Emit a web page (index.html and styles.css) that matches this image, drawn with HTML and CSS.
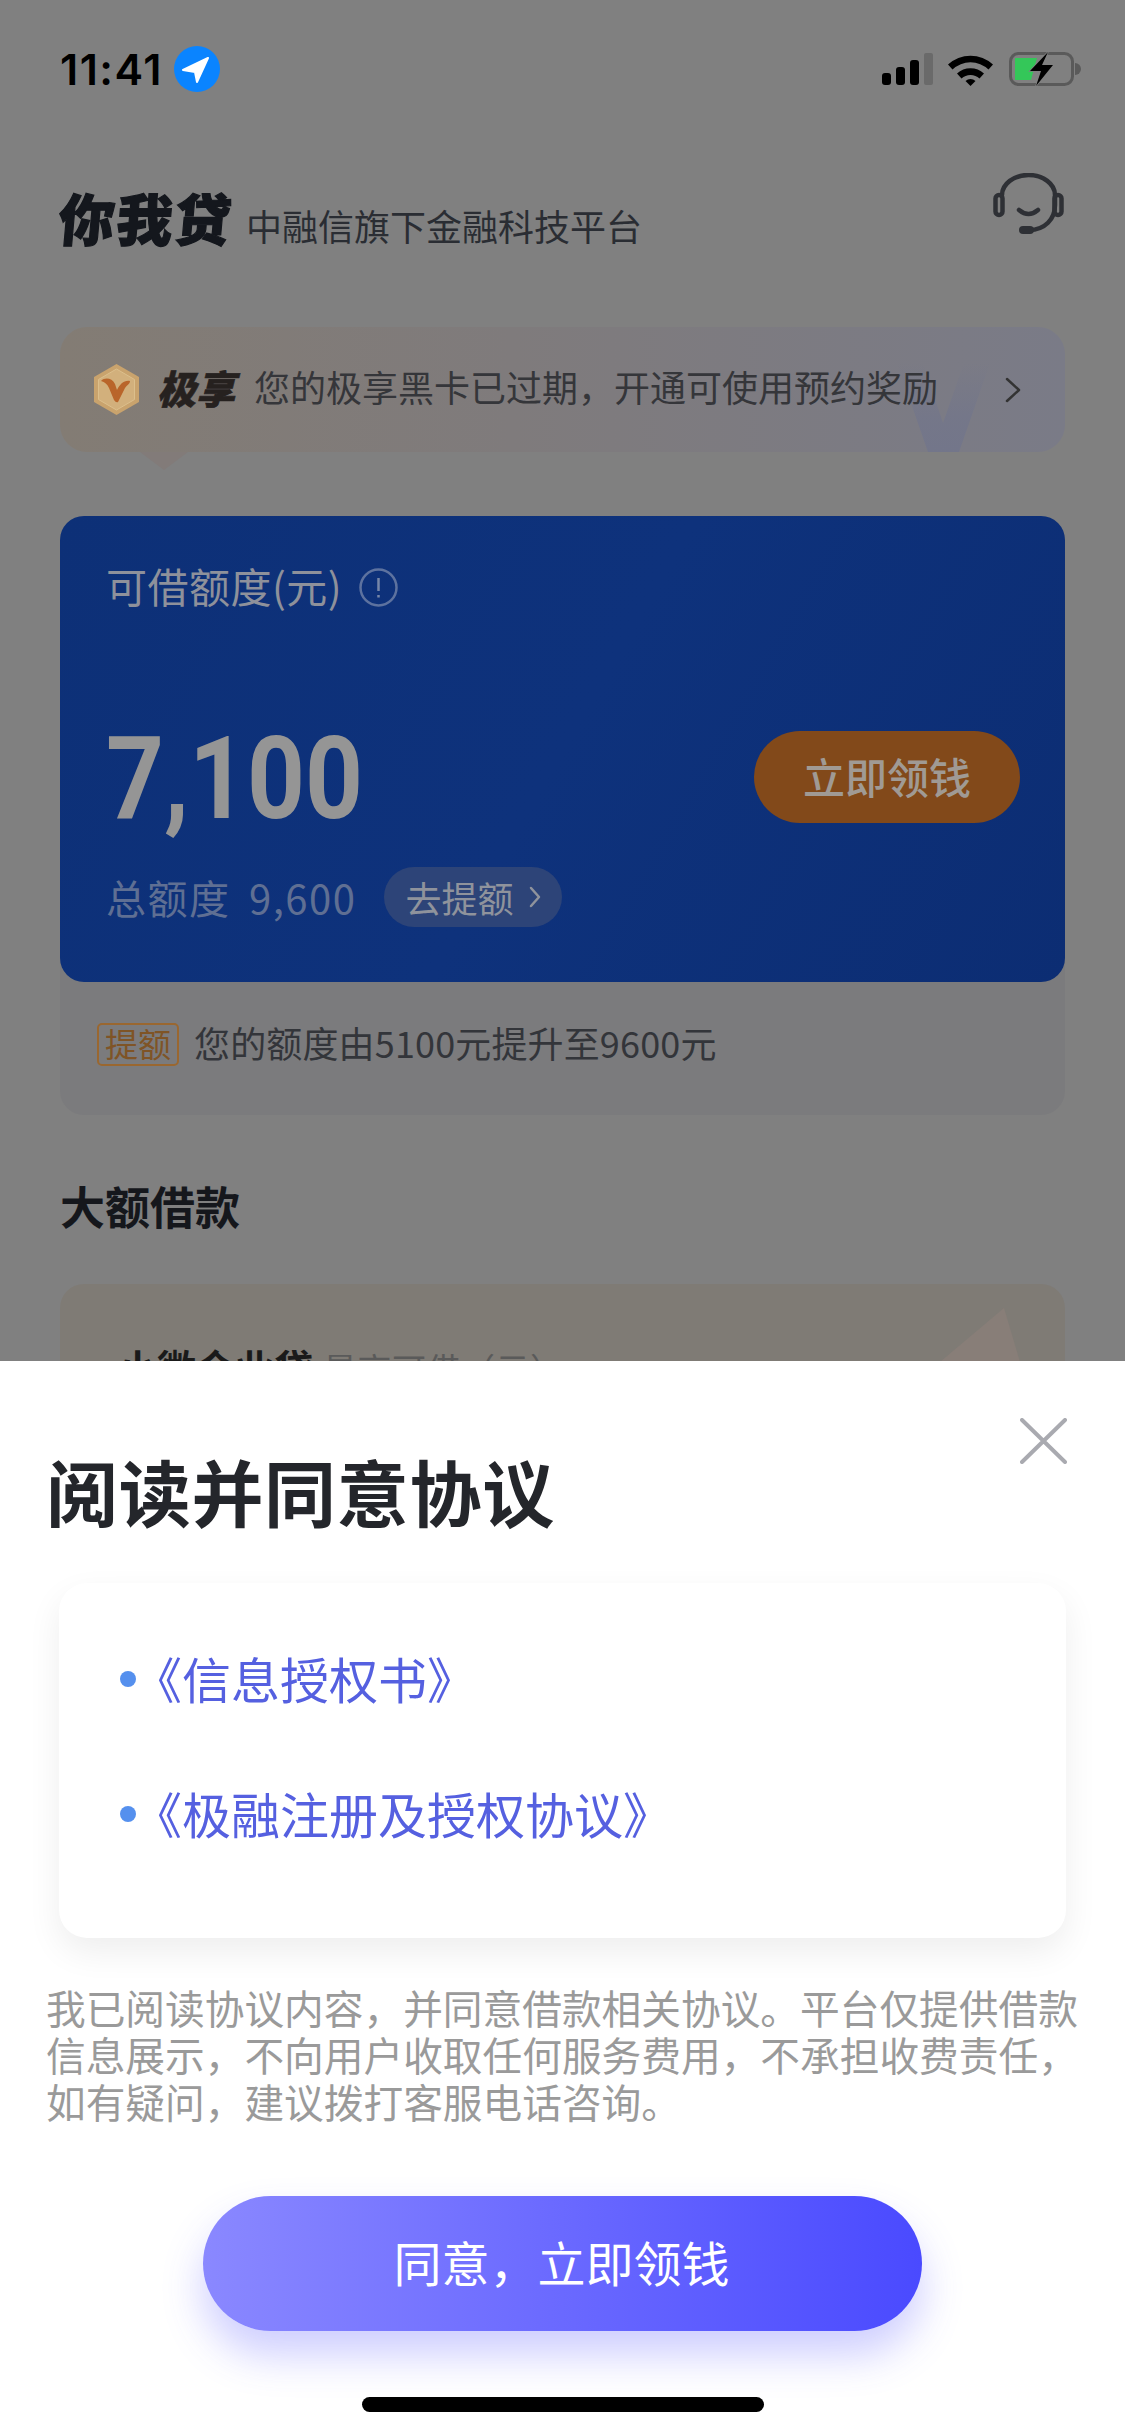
FILE: index.html
```html
<!DOCTYPE html>
<html lang="zh-CN">
<head>
<meta charset="utf-8">
<title>你我贷</title>
<link rel="stylesheet" href="styles.css">
</head>
<body>
<div class="screen">
  <main class="page">
    <div class="status">
      <div class="status-left">
        <span class="time">11:41</span>
        <svg class="loc" viewBox="0 0 46 46"><circle cx="23" cy="23" r="23" fill="#0a84ff"/><path d="M34 12 9 24l12 2 2 10z" fill="#fff" stroke="#fff" stroke-width="2" stroke-linejoin="round"/></svg>
      </div>
      <div class="status-right">
        <svg class="signal" viewBox="0 0 51 32"><rect x="0" y="20" width="9" height="12" rx="3"/><rect x="14" y="14" width="9" height="18" rx="3"/><rect x="28" y="7" width="9" height="25" rx="3"/><rect x="42" y="0" width="9" height="32" rx="2" fill="#6a6a6a"/></svg>
        <svg class="wifi" viewBox="0 0 45 33"><path d="M0 11.5A33 33 0 0 1 45 11.5L40.500 16.500A26 26 0 0 0 4.500 16.500Z"/><path d="M9 20.500A20 20 0 0 1 36 20.500L31.500 25.500A13 13 0 0 0 13.500 25.500Z"/><path d="M17.500 28A7.500 7.500 0 0 1 27.500 28L22.500 33Z"/></svg>
        <svg class="battery" viewBox="0 0 73 34"><rect x="1.500" y="1.500" width="62" height="31" rx="8" fill="none" stroke="#5a5a5a" stroke-width="3"/><path d="M6 6h22l-6 22H6z" fill="#34c759"/><path d="M66 11a6 6 0 0 1 0 12z" fill="#5a5a5a"/><path d="M39 0 21 19h11l-5 15 17-21H33z" fill="#000" stroke="#808080" stroke-width="1.500" paint-order="stroke"/></svg>
      </div>
    </div>

    <header class="header">
      <div class="brand">
        <span class="logo">你我贷</span>
        <span class="slogan">中融信旗下金融科技平台</span>
      </div>
      <svg class="headset" viewBox="0 0 71 62" fill="none" stroke="#2e3035" stroke-width="4.500" stroke-linecap="round"><path d="M9 22a26.500 20 0 0 1 53 0v10c0 14-10 25-26 25"/><rect x="2.500" y="22" width="7" height="20" rx="3.500"/><rect x="61.500" y="22" width="7" height="20" rx="3.500"/><path d="M26 37q9.500 8 19 0"/><path d="M30 57h7" stroke-width="8"/></svg>
    </header>

    <section class="vip">
      <svg class="vip-mark" viewBox="0 0 93 89"><defs><linearGradient id="vipFade" x1="0" y1="0" x2="0" y2="1"><stop offset="0" stop-color="#73768a" stop-opacity="0"/><stop offset="0.6" stop-color="#73768a" stop-opacity="0.8"/><stop offset="1" stop-color="#73768a"/></linearGradient></defs><path d="M0 0h26l20 60L67 0h26L62 89H31z" fill="url(#vipFade)"/></svg>
      <svg class="vip-badge" viewBox="0 0 47 51"><path d="M23.500 0 46 13v25L23.500 51 1 38V13z" fill="#c9a36d"/><path d="M23.500 5 41.500 15.500v20L23.500 46 5.500 35.500v-20z" fill="#d2b07c" stroke="#dcbf8c"/><path d="M8 17C12 13 19 14 22 20L24 26C27 20 31 16 37 17 37 20 34 21 32 24L25 38Q23 39 21 36L16 24C14 20 12 18 8 17Z" fill="#b9652a"/></svg>
      <span class="vip-name">极享</span>
      <span class="vip-text">您的极享黑卡已过期，开通可使用预约奖励</span>
      <svg class="vip-arrow" viewBox="0 0 16 26" fill="none" stroke="#333" stroke-width="2.500" stroke-linecap="round" stroke-linejoin="round"><path d="M2 2l12 11L2 24"/></svg>
    </section>

    <section class="credit">
      <div class="limit">
        <div class="limit-label">
          <span>可借额度(元)</span>
          <svg class="info" viewBox="0 0 39 39" fill="none" stroke="#5d729f" stroke-width="2.500"><circle cx="19.500" cy="19.500" r="18"/><path d="M19.500 10v13M19.500 27v2.500" stroke="#7787a8"/></svg>
        </div>
        <div class="limit-main">
          <span class="amount">7,100</span>
          <span class="take">立即领钱</span>
        </div>
        <div class="limit-foot">
          <span class="total">总额度 9,600</span>
          <span class="raise">去提额<svg class="raise-arrow" viewBox="0 0 12 22" fill="none" stroke="#8f939c" stroke-width="2.500" stroke-linecap="round" stroke-linejoin="round"><path d="M2 2l8 9-8 9"/></svg></span>
        </div>
      </div>
      <div class="notice">
        <span class="tag">提额</span>
        <span class="notice-text">您的额度由5100元提升至9600元</span>
      </div>
    </section>

    <h2 class="section-title">大额借款</h2>

    <section class="loan">
      <svg class="loan-deco" viewBox="0 0 80 54"><path d="M64 0 0 54h80z" fill="#887e78"/></svg>
      <span class="loan-name">小微企业贷</span>
      <span class="loan-note">最高可借（元）</span>
    </section>
  </main>

  <section class="sheet">
    <div class="sheet-head">
      <h1 class="sheet-title">阅读并同意协议</h1>
      <svg class="close" viewBox="0 0 47 46" fill="none" stroke="#a9aab0" stroke-width="4" stroke-linecap="round"><path d="M2 2l43 42M45 2 2 44"/></svg>
    </div>
    <ul class="docs">
      <li class="doc">《信息授权书》</li>
      <li class="doc">《极融注册及授权协议》</li>
    </ul>
    <p class="terms">我已阅读协议内容，并同意借款相关协议。平台仅提供借款<br>信息展示，不向用户收取任何服务费用，不承担收费责任，<br>如有疑问，建议拨打客服电话咨询。</p>
    <button class="agree">同意，立即领钱</button>
    <div class="home-bar"></div>
  </section>
</div>
</body>
</html>
```

FILE: styles.css
```css
* { box-sizing: border-box; }
html, body { margin: 0; padding: 0; }
body {
  width: 1125px;
  height: 2436px;
  overflow: hidden;
  background: #fff;
  font-family: "Noto Sans CJK SC", "Noto Sans", sans-serif;
}
.screen { display: flex; flex-direction: column; height: 2436px; }

.page {
  height: 1361px;
  overflow: hidden;
  background: #808080;
  display: flex;
  flex-direction: column;
  flex: none;
}

/* status bar */
.status {
  height: 138px;
  flex: none;
  display: flex;
  align-items: center;
  justify-content: space-between;
  padding: 0 43px 0 60px;
}
.status-left { display: flex; align-items: center; gap: 11px; }
.time {
  font-family: Inter, "Noto Sans", sans-serif;
  font-weight: 600;
  font-size: 43px;
  line-height: 46px;
  letter-spacing: 1.5px;
  color: #000;
}
.loc { width: 46px; height: 46px; }
.status-right { display: flex; align-items: center; }
.signal { width: 51px; height: 32px; margin-right: 15px; }
.wifi { width: 45px; height: 33px; margin-right: 16px; }
.battery { width: 73px; height: 34px; }

/* header */
.header {
  flex: none;
  display: flex;
  justify-content: space-between;
  align-items: flex-start;
  padding: 35px 61px 0 59px;
  height: 189px;
}
.brand { display: flex; align-items: baseline; margin-top: 9px; }
.logo {
  display: inline-block;
  font-size: 56px;
  line-height: 70px;
  font-weight: 900;
  letter-spacing: 2px;
  color: #14171d;
  -webkit-text-stroke: 1.2px #14171d;
  transform: skewX(-5deg);
}
.slogan {
  font-size: 36px;
  line-height: 50px;
  margin-left: 13px;
  color: #2a2d33;
}
.headset { width: 71px; height: 62px; }

/* vip banner */
.vip {
  flex: none;
  position: relative;
  height: 125px;
  margin: 0 60px;
  padding: 0 44px 0 33px;
  display: flex;
  align-items: center;
  border-radius: 27px;
  background: linear-gradient(90deg, #837c74 0%, #7f7b7c 45%, #7a7b87 100%);
}
.vip::after {
  content: "";
  position: absolute;
  left: 80px;
  top: 125px;
  border-left: 24px solid transparent;
  border-right: 24px solid transparent;
  border-top: 18px solid #827b79;
}
.vip-mark { position: absolute; left: 837px; bottom: 0; width: 93px; height: 89px; }
.vip-badge { width: 47px; height: 51px; flex: none; position: relative; }
.vip-name {
  position: relative;
  margin: -5px 0 0 17px;
  font-size: 39px;
  line-height: 50px;
  font-weight: 900;
  font-style: italic;
  color: #26211f;
  -webkit-text-stroke: 0.6px #26211f;
}
.vip-text {
  position: relative;
  margin: -7px 0 0 19px;
  font-size: 36px;
  line-height: 50px;
  color: #35363a;
  white-space: nowrap;
}
.vip-arrow { position: relative; width: 16px; height: 26px; margin-left: auto; }

/* credit */
.credit {
  flex: none;
  margin: 64px 60px 0;
  border-radius: 24px;
  background: #7b7b7d;
}
.limit {
  height: 466px;
  padding: 51px 45px 0 46px;
  border-radius: 24px;
  background: linear-gradient(120deg, #0d3077 0%, #0e327c 50%, #0c2d73 100%);
}
.limit-label {
  display: flex;
  align-items: center;
  gap: 17px;
  height: 40px;
  font-size: 41px;
  line-height: 40px;
  letter-spacing: 0.5px;
  color: #8e919b;
}
.limit-label span { margin-top: -4px; }
.info { width: 39px; height: 39px; }
.limit-main {
  display: flex;
  justify-content: space-between;
  align-items: center;
  height: 92px;
  margin-top: 124px;
}
.amount {
  display: inline-block;
  margin-top: 4px;
  font-family: Roboto, sans-serif;
  font-weight: 700;
  font-size: 115px;
  line-height: 92px;
  color: #959595;
  transform: scaleX(0.88);
  transform-origin: left center;
}
.take {
  width: 266px;
  height: 92px;
  border-radius: 46px;
  background: #82491a;
  color: #a09a94;
  font-size: 42px;
  font-weight: 500;
  line-height: 90px;
  text-align: center;
}
.limit-foot {
  display: flex;
  align-items: center;
  height: 60px;
  margin-top: 44px;
}
.total {
  font-size: 40px;
  line-height: 58px;
  letter-spacing: 1.5px;
  word-spacing: 8px;
  color: #5f6f93;
}
.raise {
  display: flex;
  align-items: center;
  height: 60px;
  margin-left: 28px;
  padding: 0 21px;
  border-radius: 30px;
  background: #2d4478;
  font-size: 36px;
  line-height: 56px;
  color: #8f939c;
}
.raise-arrow { width: 12px; height: 22px; margin-left: 16px; }
.notice {
  height: 133px;
  display: flex;
  align-items: center;
  padding: 0 37px 14px;
}
.tag {
  width: 82px;
  height: 43px;
  margin-top: 6px;
  border: 2px solid #9a6730;
  border-radius: 5px;
  font-size: 33px;
  line-height: 37px;
  text-align: center;
  color: #7f5426;
  white-space: nowrap;
}
.notice-text {
  margin-left: 15px;
  font-size: 36px;
  line-height: 44px;
  letter-spacing: 0.15px;
  color: #33353a;
}

/* section */
.section-title {
  flex: none;
  margin: 70px 60px 0;
  font-size: 45px;
  line-height: 42px;
  font-weight: 700;
  color: #15171c;
}
.loan {
  flex: none;
  position: relative;
  height: 200px;
  margin: 57px 60px 0;
  padding: 60px 58px 0;
  border-radius: 24px;
  background: #7f7b75;
  display: flex;
  align-items: baseline;
}
.loan-deco { position: absolute; left: 880px; top: 24px; width: 80px; height: 54px; }
.loan-name { font-size: 39px; line-height: 44px; font-weight: 700; color: #1a1a1a; white-space: nowrap; }
.loan-note { margin-left: 10px; font-size: 34px; line-height: 44px; letter-spacing: 0.5px; color: #5a5a5a; white-space: nowrap; }

/* sheet */
.sheet {
  flex: 1;
  background: #fff;
  display: flex;
  flex-direction: column;
}
.sheet-head {
  display: flex;
  justify-content: space-between;
  align-items: flex-start;
  padding: 57px 58px 0 46px;
  height: 222px;
  flex: none;
}
.sheet-title {
  margin: 36px 0 0;
  font-size: 72px;
  line-height: 72px;
  font-weight: 700;
  letter-spacing: 0.7px;
  color: #24262b;
}
.close { width: 47px; height: 46px; flex: none; }
.docs {
  flex: none;
  list-style: none;
  margin: 0 59px;
  padding: 27px 0 0 61px;
  height: 355px;
  border-radius: 28px;
  background: #fff;
  box-shadow: 0 14px 34px rgba(0, 0, 0, 0.07);
}
.doc {
  display: flex;
  align-items: center;
  height: 135px;
  font-size: 49px;
  line-height: 60px;
  color: #5560e0;
}
.doc::before {
  content: "";
  width: 16px;
  height: 16px;
  border-radius: 50%;
  background: #5590ee;
  margin: 3px -3px 0 0;
  flex: none;
}
.terms {
  flex: none;
  margin: 45px 46px 0;
  font-size: 39.7px;
  line-height: 47px;
  color: #9a9a9a;
  white-space: nowrap;
}
.agree {
  flex: none;
  display: block;
  width: 719px;
  height: 135px;
  margin: 72px auto 0;
  padding: 0 2px 6px 0;
  border: 0;
  border-radius: 68px;
  background: linear-gradient(90deg, #8a88ff 0%, #4a4aff 100%);
  box-shadow: 0 24px 40px rgba(80, 80, 255, 0.28);
  font-family: inherit;
  font-size: 48px;
  color: #fff;
}
.home-bar {
  flex: none;
  width: 402px;
  height: 15px;
  margin: 66px auto 0;
  border-radius: 8px;
  background: #000;
}
```
